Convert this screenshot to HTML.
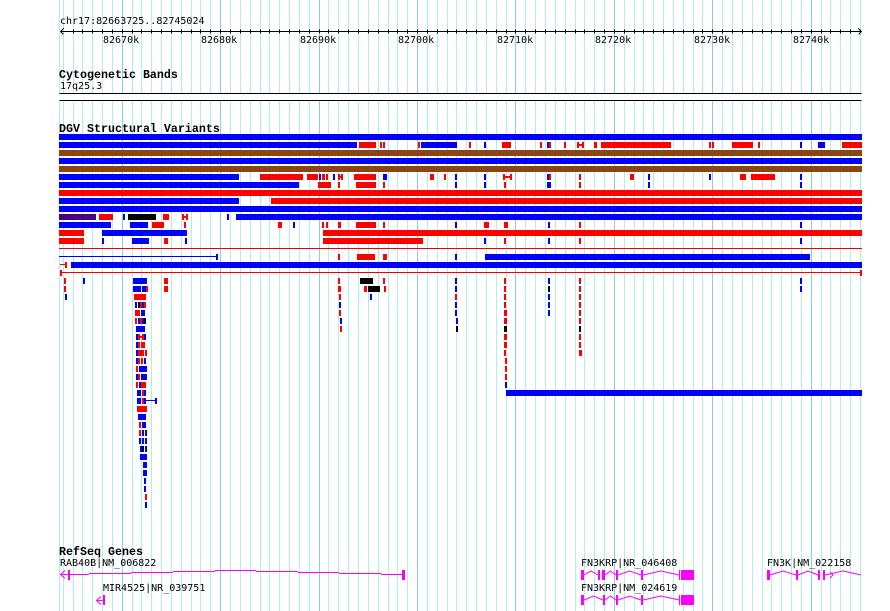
<!DOCTYPE html>
<html><head><meta charset="utf-8"><title>Genome browser</title>
<style>
html,body{margin:0;padding:0;background:#fff;width:890px;height:611px;overflow:hidden}
svg{display:block}
text{font-family:"DejaVu Sans Mono","Liberation Mono",monospace;font-size:10px;fill:#000}
text.b{font-family:"Liberation Mono",monospace;font-weight:bold;font-size:11.67px}
</style></head><body>
<svg width="890" height="611" viewBox="0 0 890 611" shape-rendering="crispEdges" fill="none">
<rect width="890" height="611" fill="#fff"/>
<g transform="translate(.5 0)">
<path stroke="#b0eeee" d="M59 0V611M63 0V611M73 0V611M82 0V611M92 0V611M102 0V611M112 0V611M132 0V611M141 0V611M151 0V611M161 0V611M171 0V611M181 0V611M191 0V611M200 0V611M210 0V611M230 0V611M240 0V611M250 0V611M260 0V611M269 0V611M279 0V611M289 0V611M299 0V611M309 0V611M328 0V611M338 0V611M348 0V611M358 0V611M368 0V611M378 0V611M388 0V611M397 0V611M407 0V611M427 0V611M437 0V611M447 0V611M456 0V611M466 0V611M476 0V611M486 0V611M496 0V611M506 0V611M525 0V611M535 0V611M545 0V611M555 0V611M565 0V611M575 0V611M584 0V611M594 0V611M604 0V611M624 0V611M634 0V611M643 0V611M653 0V611M663 0V611M673 0V611M683 0V611M693 0V611M702 0V611M722 0V611M732 0V611M742 0V611M752 0V611M762 0V611M771 0V611M781 0V611M791 0V611M801 0V611M821 0V611M830 0V611M840 0V611M850 0V611M860 0V611"/>
<path stroke="#87ceeb" d="M122 0V611M220 0V611M319 0V611M417 0V611M515 0V611M614 0V611M712 0V611M811 0V611"/>
</g>
<rect x="59" y="94" width="803" height="6" fill="#fff"/>
<!-- ruler -->
<g transform="translate(.5 .5)" stroke="#000">
<path d="M60 31H861M60 31l3-3M60 31l3 3M861 31l-3-3M861 31l-3 3"/>
<path d="M73 29v4M82 29v4M92 29v4M102 29v4M112 29v4M122 29v4M132 29v4M141 29v4M151 29v4M161 29v4M171 29v4M181 29v4M191 29v4M200 29v4M210 29v4M220 29v4M230 29v4M240 29v4M250 29v4M260 29v4M269 29v4M279 29v4M289 29v4M299 29v4M309 29v4M319 29v4M328 29v4M338 29v4M348 29v4M358 29v4M368 29v4M378 29v4M388 29v4M397 29v4M407 29v4M417 29v4M427 29v4M437 29v4M447 29v4M456 29v4M466 29v4M476 29v4M486 29v4M496 29v4M506 29v4M515 29v4M525 29v4M535 29v4M545 29v4M555 29v4M565 29v4M575 29v4M584 29v4M594 29v4M604 29v4M614 29v4M624 29v4M634 29v4M643 29v4M653 29v4M663 29v4M673 29v4M683 29v4M693 29v4M702 29v4M712 29v4M722 29v4M732 29v4M742 29v4M752 29v4M762 29v4M771 29v4M781 29v4M791 29v4M801 29v4M811 29v4M821 29v4M830 29v4M840 29v4M850 29v4"/>
<path d="M59 93H861M59 100H861"/>
</g>
<text x="60" y="24">chr17:82663725..82745024</text>
<text x="103" y="43">82670k</text><text x="201" y="43">82680k</text><text x="300" y="43">82690k</text><text x="398" y="43">82700k</text><text x="497" y="43">82710k</text><text x="595" y="43">82720k</text><text x="694" y="43">82730k</text><text x="793" y="43">82740k</text>
<text class="b" x="59" y="78">Cytogenetic Bands</text>
<text x="60" y="89">17q25.3</text>
<text class="b" x="59" y="132">DGV Structural Variants</text>
<text class="b" x="59" y="555">RefSeq Genes</text>
<text x="60" y="566">RAB40B|NM_006822</text>
<text x="103" y="591">MIR4525|NR_039751</text>
<text x="581" y="566">FN3KRP|NR_046408</text>
<text x="767" y="566">FN3K|NM_022158</text>
<text x="581" y="591">FN3KRP|NM_024619</text>
<!-- features: 6px-high bars -->
<g stroke-width="6">
<path stroke="#8b4513" d="M59 153H862M59 169H862"/>
<path stroke="#4b0082" d="M59 217H96"/>
<path stroke="#0000ff" d="M59 137H862M59 145H357M421 145H457M484 145H486M547 145H549M800 145H802M818 145H825M59 161H862
M59 177H239M319 177H321M333 177H335M383 177H387M455 177H457M484 177H486M547 177H549M648 177H650M709 177H711M800 177H802
M59 185H299M455 185H457M484 185H486M547 185H551M648 185H650M800 185H802
M59 201H239M59 209H862M123 217H125M227 217H229M236 217H862
M59 225H111M130 225H148M293 225H295M455 225H457M548 225H550M800 225H802
M102 233H187M102 241H104M132 241H149M185 241H187M484 241H486M548 241H550M800 241H802
M455 257H457M485 257H810M71 265H862
M83 281H85M133 281H147M455 281H457M548 281H550M800 281H802
M133 289H141M142 289H146M455 289H457M800 289H802
M65 297H67M370 297H372M548 297H550
M135 305H137M142 305H144M339 305H341M455 305H457M548 305H550
M141 313H145M455 313H457M548 313H550
M138 321H140M142 321H144M340 321H342M456 321H458
M136 329H145
M136 337H138M144 337H146
M136 345H138
M136 353H138
M136 361H138M144 361H146
M139 369H147
M136 377H138M141 377H147
M139 385H141M505 385H507
M137 393H141M144 393H146M506 393H862
M137 401H141M144 401H146M155 401H157
M138 417H146M142 425H146
M142 433H144M145 433H147
M139 441H141M142 441H144M145 441H147
M140 449H142M145 449H147
M140 457H147M143 465H147M143 473H147M144 481H146M144 489H146M145 505H147"/>
<path stroke="#ff0000" d="M359 145H376M380 145H382M383 145H385M418 145H420M469 145H471M502 145H511M540 145H542M549 145H551M564 145H566M577 145H579M582 145H584M594 145H597M601 145H671M709 145H711M712 145H714M732 145H753M758 145H760M842 145H862
M260 177H303M307 177H318M322 177H325M326 177H328M338 177H340M341 177H343M354 177H376M430 177H434M444 177H446M503 177H505M510 177H512M549 177H551M579 177H581M630 177H634M740 177H746M751 177H775
M318 185H331M338 185H340M356 185H376M383 185H385M504 185H506M579 185H581
M59 193H862M271 201H862
M99 217H113M163 217H169M182 217H184M186 217H188
M152 225H164M184 225H186M278 225H282M322 225H324M326 225H328M338 225H341M356 225H376M383 225H385M484 225H489M504 225H508M579 225H581
M59 233H84M323 233H862
M59 241H84M164 241H168M323 241H423M504 241H506M579 241H581
M338 257H340M357 257H375M383 257H387M65 265H67
M64 281H66M164 281H168M338 281H340M383 281H385M504 281H506M579 281H581
M64 289H66M146 289H148M164 289H168M338 289H341M364 289H367M384 289H386M504 289H506M579 289H581
M134 297H146M339 297H341M455 297H457M504 297H506M579 297H581
M140 305H142M144 305H146M504 305H506M579 305H581
M135 313H140M339 313H341M504 313H507M579 313H581
M135 321H137M140 321H142M504 321H507M579 321H581
M340 329H342
M138 337H140M142 337H144M504 337H507M579 337H581
M138 345H140M141 345H145M504 345H507M579 345H581
M138 353H144M145 353H147M504 353H506M579 353H582
M138 361H140M141 361H143M505 361H507
M136 369H138M505 369H507
M138 377H140M505 377H507
M136 385H138M141 385H146
M142 393H144
M142 401H144
M137 409H147
M139 425H141
M139 433H141
M145 497H147"/>
<path stroke="#000" d="M128 217H156M360 281H373M368 289H380M548 289H550M138 305H140M144 321H146M456 329H458M504 329H507M579 329H581M142 449H144"/>
</g>
<!-- thin lines -->
<g transform="translate(0 .5)" stroke="#ee0000">
<path d="M59 248H862M60 272H862"/>
<path stroke="#ff0000" d="M60 264H65"/>
</g>
<path fill="#ff0000" d="M60 270h2v6h-2zM860 270h2v6h-2z"/>
<!-- connectors -->
<path stroke="#ff0000" stroke-width="2" d="M579 145H582M340 177H341M505 177H510M184 217H186M140 337H142"/>
<path stroke="#0000ff" d="M59 256.5H216M146 400.5H155"/>
<path fill="#0000ff" d="M216 254h2v6h-2z"/>
</svg>
<!-- genes -->
<svg width="890" height="611" viewBox="0 0 890 611" style="position:absolute;left:0;top:0" fill="none">
<g stroke="#ff00ff" shape-rendering="crispEdges">
<path d="M61 574.5H89M89 573.5H131M131 572.5H173M173 571.5H215M215 570.5H256M256 571.5H298M298 572.5H339M339 573.5H381M381 574.5H402"/>
<path d="M97 600.5H103"/>
</g>
<g stroke="#ff00ff" shape-rendering="auto">
<path d="M65 570.5l-4.500 4 4.500 4M101 596.500l-4.500 4 4.500 4"/>
<path d="M584 575l7 -4 7 4M605 575l5.500 -4 5.500 4M618 575l11.500-4 11.500 4M643 575l18-4 18 4"/>
<path d="M584 600l9.500-4 9.500 4M605 600l5.500-4 5.500 4M618 600l11.500-4 11.500 4M643 600l18-4 18 4"/>
<path d="M770 575l13-4 13 4M798 575l10-4 10 4M825 575l18-4 18 4M830 572l3 3-3 3"/>
</g>
<path fill="#ff00ff" shape-rendering="crispEdges" d="M68 570h2v10h-2zM402 570h3v10h-3zM103 595h2v10h-2z
M581 570h3v10h-3zM598 570h2v10h-2zM602 570h3v10h-3zM616 570h2v10h-2zM641 570h2v10h-2zM679 570h1v10h-1zM681 570h13v10h-13z
M581 595h3v10h-3zM603 595h2v10h-2zM616 595h2v10h-2zM641 595h2v10h-2zM679 595h1v10h-1zM681 595h13v10h-13z
M767 570h3v10h-3zM796 570h2v10h-2zM818 570h2v10h-2zM823 570h2v10h-2z"/>
</svg>
</body></html>
